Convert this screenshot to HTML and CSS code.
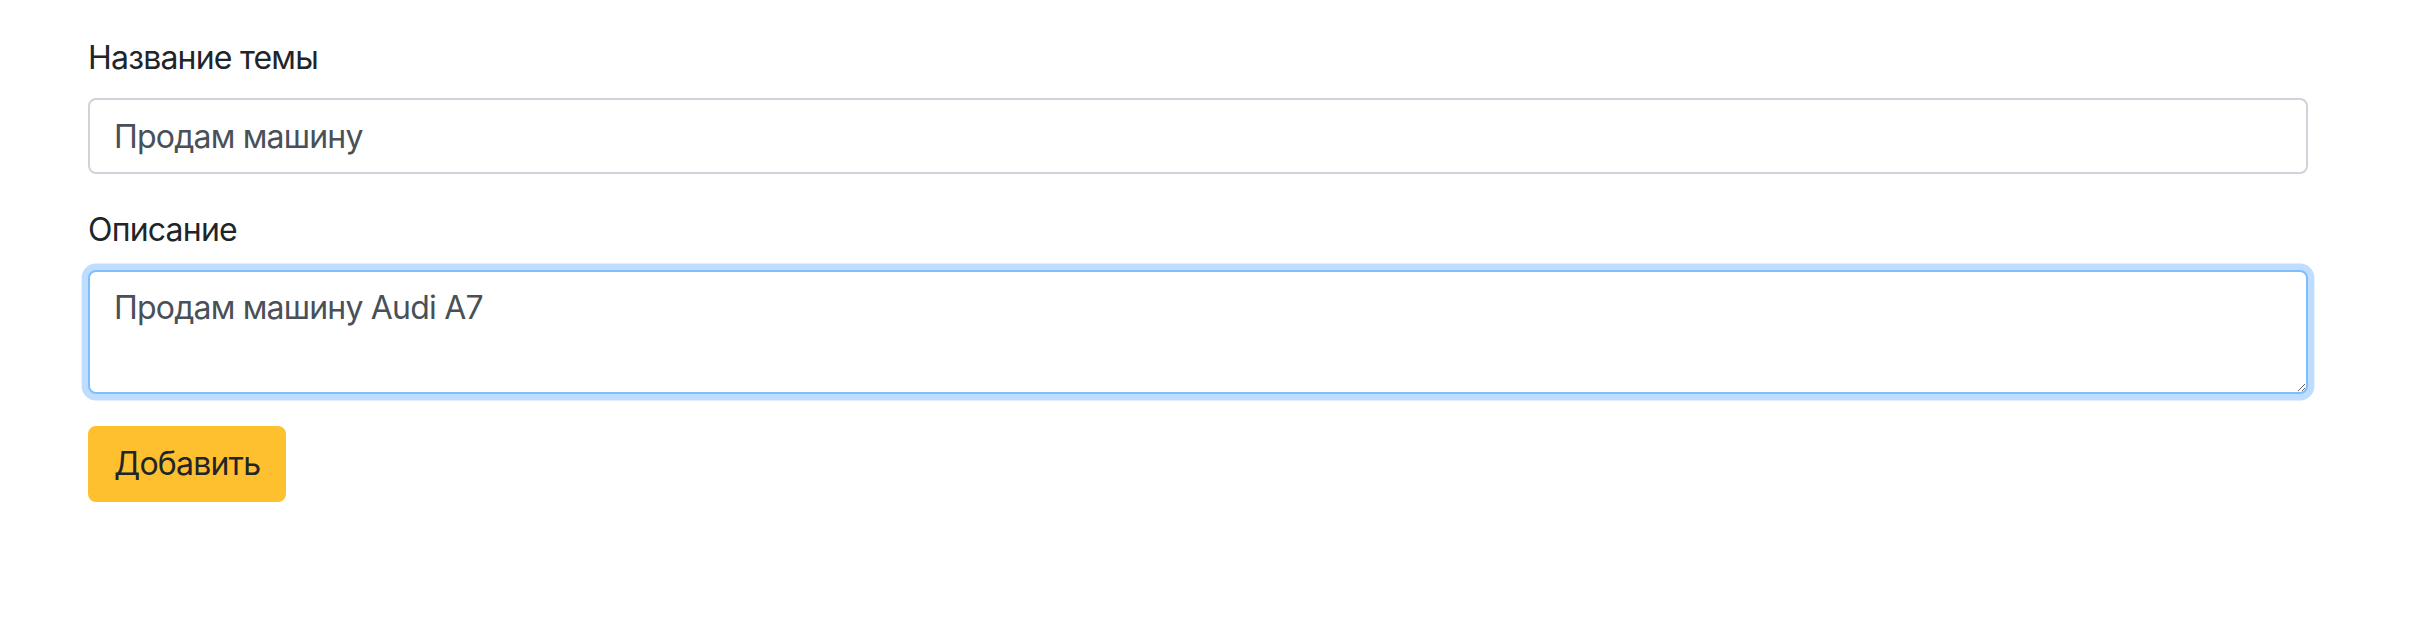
FILE: index.html
```html
<!DOCTYPE html>
<html lang="ru">
<head>
<meta charset="utf-8">
<title>Форма</title>
<link rel="stylesheet" href="styles.css">
</head>
<body>
<div class="container">
  <form class="topic-form">
    <div class="form-group">
      <label class="form-label" for="title">Название темы</label>
      <input class="form-control" id="title" type="text" value="Продам машину">
    </div>
    <div class="form-group">
      <label class="form-label" for="desc">Описание</label>
      <textarea class="form-control form-textarea is-focused" id="desc" rows="2">Продам машину Audi A7</textarea>
    </div>
    <button class="btn btn-warning" type="button">Добавить</button>
  </form>
</div>
</body>
</html>
```
FILE: styles.css
```css
* { box-sizing: border-box; }
html, body {
  margin: 0;
  padding: 0;
  background: #fff;
}
body {
  font-family: Inter, "Noto Sans", "Liberation Sans", sans-serif;
  font-size: 32px;
  line-height: 1.5;
  letter-spacing: -0.8px;
  color: #212529;
}
.container {
  width: 2220px;
  margin-left: 88px;
  padding-top: 34px;
}
.topic-form {
  display: flex;
  flex-direction: column;
  align-items: flex-start;
}
.form-group {
  display: flex;
  flex-direction: column;
  width: 100%;
  margin-bottom: 32px;
}
.form-label {
  margin-bottom: 16px;
  line-height: 48px;
}
.form-control {
  display: block;
  width: 100%;
  height: 76px;
  padding: 12px 24px;
  font-family: inherit;
  font-size: 32px;
  line-height: 48px;
  letter-spacing: -0.8px;
  color: #495057;
  background: #fff;
  border: 2px solid #ced4da;
  border-radius: 8px;
  outline: none;
  margin: 0;
}
.form-textarea {
  height: 124px;
  resize: vertical;
}
.is-focused {
  border-color: #80bdff;
  box-shadow: 0 0 0 6.4px rgba(0, 123, 255, 0.25);
}
.btn {
  font-family: inherit;
  font-size: 32px;
  line-height: 48px;
  letter-spacing: -0.8px;
  padding: 12px 24px;
  border: 2px solid transparent;
  border-radius: 8px;
  margin: 0;
  cursor: pointer;
}
.btn-warning {
  background: #ffc02f;
  border-color: #ffc02f;
  color: #212529;
}
```
